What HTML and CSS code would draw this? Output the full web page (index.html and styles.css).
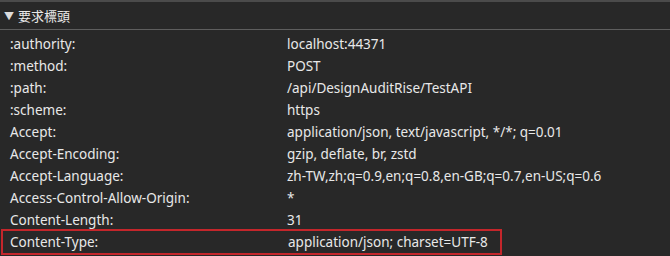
FILE: index.html
```html
<!DOCTYPE html>
<html lang="zh-Hant">
<head>
<meta charset="utf-8">
<link rel="stylesheet" href="styles.css">
</head>
<body>
<section class="panel">
  <div class="head"><span class="tri">▼</span><span class="title">要求標頭</span></div>
  <div class="rows">
    <div class="row"><span class="k">:authority:</span><span class="v">localhost:44371</span></div>
    <div class="row"><span class="k">:method:</span><span class="v">POST</span></div>
    <div class="row"><span class="k">:path:</span><span class="v">/api/DesignAuditRise/TestAPI</span></div>
    <div class="row"><span class="k">:scheme:</span><span class="v">https</span></div>
    <div class="row"><span class="k">Accept:</span><span class="v">application/json, text/javascript, */*; q=0.01</span></div>
    <div class="row"><span class="k">Accept-Encoding:</span><span class="v">gzip, deflate, br, zstd</span></div>
    <div class="row"><span class="k">Accept-Language:</span><span class="v">zh-TW,zh;q=0.9,en;q=0.8,en-GB;q=0.7,en-US;q=0.6</span></div>
    <div class="row"><span class="k">Access-Control-Allow-Origin:</span><span class="v">*</span></div>
    <div class="row"><span class="k">Content-Length:</span><span class="v">31</span></div>
    <div class="row hl"><span class="k">Content-Type:</span><span class="v">application/json; charset=UTF-8</span></div>
  </div>
</section>
</body>
</html>
```
FILE: styles.css
```css
html, body { margin: 0; padding: 0; background: #282828; }
.panel {
  width: 670px; height: 256px; overflow: hidden;
  background: #282828;
  border-top: 2px solid #4b4b4b;
  box-sizing: border-box;
  font-family: "Noto Sans", "Noto Sans CJK TC", sans-serif;
  font-size: 13.5px;
  color: #e8e8e8;
}
.head {
  height: 27px; display: flex; align-items: center;
  padding-left: 4px; gap: 4px;
  border-bottom: 1px solid #5e5e5e;
}
.tri { font-size: 10px; color: #dcdcdc; }
.title { font-family: "Noto Sans CJK TC", sans-serif; font-size: 13px; }
.rows { padding-top: 3px; }
.row {
  display: grid; grid-template-columns: 277px 1fr;
  height: 22px; align-items: center; padding-left: 10px;
  box-sizing: border-box; white-space: nowrap;
}
.row.hl {
  width: 501px; margin-left: 1px; padding-left: 7px;
  border: 2px solid #c4262b; height: 26px; margin-top: -2px;
  grid-template-columns: 278px 1fr;
}
```
